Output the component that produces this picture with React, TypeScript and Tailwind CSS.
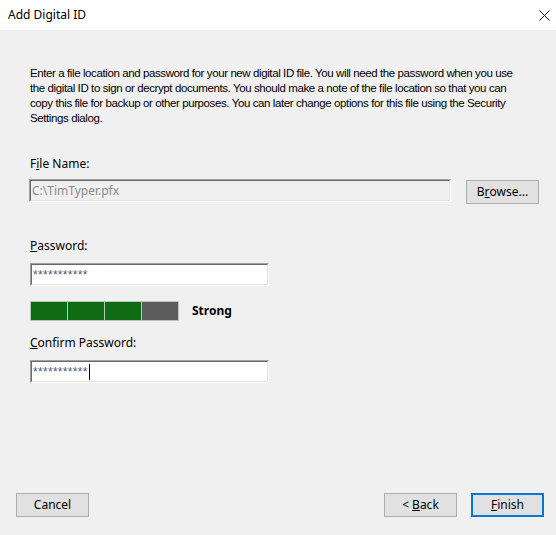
import { useState } from "react";

const ui = { fontFamily: '"Noto Sans", "Open Sans", sans-serif' };
const body = { fontFamily: '"Liberation Sans", Arial, sans-serif' };

function Field({ value, disabled, caret, masked, width }: { value: string; disabled?: boolean; caret?: boolean; masked?: boolean; width: string }) {
  return (
    <div className={`${width} shrink-0 border border-t-[#a0a0a0] border-l-[#a0a0a0] border-r-white border-b-white`}>
      <div
        className={`flex h-[21px] items-center border border-t-[#696969] border-l-[#696969] border-r-[#e3e3e3] border-b-[#e3e3e3] px-[1px] text-[12px] ${
          disabled ? "bg-[#f0f0f0] text-[#8a8a8a]" : "bg-white text-[#4a5a7a]"
        }`}
        style={masked ? body : ui}
      >
        <span className={masked ? "tracking-[0.3px]" : ""}>{value}</span>
        {caret ? <span className="ml-[1px] h-[16px] w-px bg-black" /> : null}
      </div>
    </div>
  );
}

function Button({ children, primary, className = "" }: { children: React.ReactNode; primary?: boolean; className?: string }) {
  return (
    <button
      type="button"
      className={`flex h-[24px] w-[73px] shrink-0 items-center justify-center bg-[#e1e1e1] text-[12px] text-black ${
        primary ? "border-2 border-[#0078d7]" : "border border-[#adadad]"
      } ${className}`}
      style={ui}
    >
      {children}
    </button>
  );
}

export default function App() {
  const [strength] = useState(3);

  return (
    <div className="flex h-[535px] w-[556px] flex-col bg-[#f0f0f0]">
      <div className="flex h-[30px] items-center justify-between bg-white pl-[8px] pr-[6px]">
        <span className="text-[12px] text-black" style={ui}>
          Add Digital ID
        </span>
        <svg width="11" height="11" viewBox="0 0 11 11">
          <path d="M0.5 0.5 L10.5 10.5 M10.5 0.5 L0.5 10.5" stroke="#111" strokeWidth="1" fill="none" />
        </svg>
      </div>

      <div className="flex flex-1 flex-col px-[30px]">
        <p className="mt-[36px] text-[11.5px] leading-[15px] tracking-[-0.4px] text-black" style={body}>
          Enter a file location and password for your new digital ID file. You will need the password when you use the
          digital ID to sign or decrypt documents. You should make a note of the file location so that you can copy this
          file for backup or other purposes. You can later change options for this file using the Security Settings
          dialog.
        </p>

        <label className="mt-[30px] text-[12px] leading-[15px] text-black" style={ui}>
          F<span className="underline">i</span>le Name:
        </label>
        <div className="mt-[8px] flex items-start gap-[15px]">
          <Field value="C:\TimTyper.pfx" disabled width="w-[422px] -ml-px" />
          <Button className="mt-px">
            B<span className="underline">r</span>owse...
          </Button>
        </div>

        <label className="mt-[34px] text-[12px] leading-[15px] text-black" style={ui}>
          <span className="underline">P</span>assword:
        </label>
        <div className="mt-[10px]">
          <Field value="***********" masked width="w-[239px]" />
        </div>

        <div className="mt-[15px] flex items-center gap-[13px]">
          <div className="flex h-[20px] w-[149px] gap-px bg-[#bcc7bc] p-px">
            {[0, 1, 2, 3].map((i) => (
              <div key={i} className={`flex-1 ${i < strength ? "bg-[#0f6b13]" : "bg-[#5d5d5d]"}`} />
            ))}
          </div>
          <span className="text-[12px] font-bold text-black" style={ui}>
            Strong
          </span>
        </div>

        <label className="mt-[14px] text-[12px] leading-[15px] text-black" style={ui}>
          <span className="underline">C</span>onfirm Password:
        </label>
        <div className="mt-[10px]">
          <Field value="***********" masked caret width="w-[239px]" />
        </div>

        <div className="mt-auto mb-[18px] -ml-[14px] -mr-[18px] flex items-center">
          <Button>Cancel</Button>
          <div className="flex-1" />
          <Button>
            &lt; <span className="ml-[3px] underline">B</span>ack
          </Button>
          <Button primary className="ml-[14px]">
            <span className="underline">F</span>inish
          </Button>
        </div>
      </div>
    </div>
  );
}
